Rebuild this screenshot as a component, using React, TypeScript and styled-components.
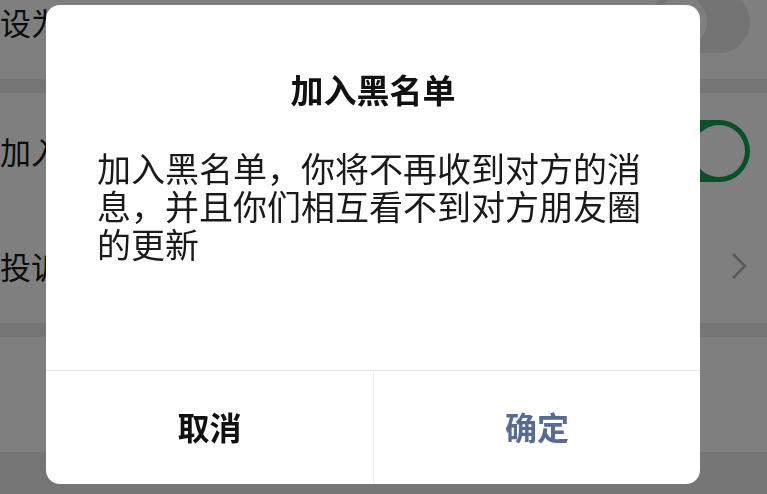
import React from 'react';
import styled, { createGlobalStyle } from 'styled-components';

const GlobalStyle = createGlobalStyle`
  html, body {
    margin: 0;
    padding: 0;
    width: 100%;
    height: 100%;
    overflow: hidden;
    background: #ededed;
    font-family: "Noto Sans CJK SC", "Noto Sans", sans-serif;
  }
`;

const Page = styled.div`
  width: 100%;
  height: 100vh;
  background: #ededed;
  display: flex;
  flex-direction: column;
  margin-top: -36px;
`;

const Section = styled.div`
  display: flex;
  flex-direction: column;
  background: #fff;
  margin-bottom: 14px;
`;

const Row = styled.div<{ $center?: boolean }>`
  height: 115px;
  display: flex;
  align-items: center;
  justify-content: ${p => (p.$center ? 'center' : 'space-between')};
  padding: 0 17px 0 0;
  font-size: 31px;
  color: #191919;
`;

const Label = styled.span<{ $danger?: boolean }>`
  color: ${p => (p.$danger ? '#fa5151' : '#191919')};
  white-space: nowrap;
`;

const Switch = styled.div<{ $on?: boolean }>`
  width: 100px;
  height: 62px;
  border-radius: 31px;
  box-sizing: border-box;
  background: ${p => (p.$on ? '#12a050' : '#e8e8e8')};
  display: flex;
  align-items: center;
  justify-content: ${p => (p.$on ? 'flex-end' : 'flex-start')};
  padding: 0 5px;
`;

const Knob = styled.div`
  width: 52px;
  height: 52px;
  border-radius: 50%;
  background: #fff;
`;

const Chevron = styled.svg`
  width: 16px;
  height: 28px;
  margin-right: 3px;
`;

const Overlay = styled.div`
  position: fixed;
  inset: 0;
  background: rgba(0, 0, 0, 0.5);
  display: flex;
  align-items: flex-start;
  padding: 5px 0 0 46px;
`;

const Dialog = styled.div`
  width: 654px;
  height: 479px;
  background: #fff;
  border-radius: 14px;
  display: flex;
  flex-direction: column;
  overflow: hidden;
`;

const Content = styled.div`
  flex: 1;
  display: flex;
  flex-direction: column;
  padding: 62px 51px 0;
`;

const Title = styled.div`
  font-size: 33px;
  line-height: 44px;
  font-weight: 700;
  color: #111;
  text-align: center;
`;

const Body = styled.div`
  margin-top: 38px;
  font-size: 34px;
  line-height: 38px;
  color: #1a1a1a;
`;

const Footer = styled.div`
  height: 113px;
  display: grid;
  grid-template-columns: 327px 1fr;
  border-top: 1px solid #e5e5e5;
`;

const Action = styled.button<{ $primary?: boolean }>`
  border: none;
  background: transparent;
  border-left: ${p => (p.$primary ? '1px solid #ededed' : 'none')};
  font-family: "Noto Sans CJK SC", sans-serif;
  font-size: 32px;
  font-weight: 700;
  color: ${p => (p.$primary ? '#576b95' : '#111')};
  padding: 0 0 4px;
`;

const App: React.FC = () => {
  return (
    <>
      <GlobalStyle />
      <Page>
        <Section>
          <Row>
            <Label>设为星标朋友</Label>
            <Switch>
              <Knob />
            </Switch>
          </Row>
        </Section>
        <Section>
          <Row>
            <Label>加入黑名单</Label>
            <Switch $on>
              <Knob />
            </Switch>
          </Row>
          <Row>
            <Label>投诉</Label>
            <Chevron viewBox="0 0 16 28">
              <path d="M2 2 L14 14 L2 26" fill="none" stroke="#b2b2b2" strokeWidth="2.5" />
            </Chevron>
          </Row>
        </Section>
        <Section>
          <Row $center>
            <Label $danger>删除</Label>
          </Row>
        </Section>
      </Page>
      <Overlay>
        <Dialog>
          <Content>
            <Title>加入黑名单</Title>
            <Body>加入黑名单，你将不再收到对方的消息，并且你们相互看不到对方朋友圈的更新</Body>
          </Content>
          <Footer>
            <Action>取消</Action>
            <Action $primary>确定</Action>
          </Footer>
        </Dialog>
      </Overlay>
    </>
  );
};

export default App;
